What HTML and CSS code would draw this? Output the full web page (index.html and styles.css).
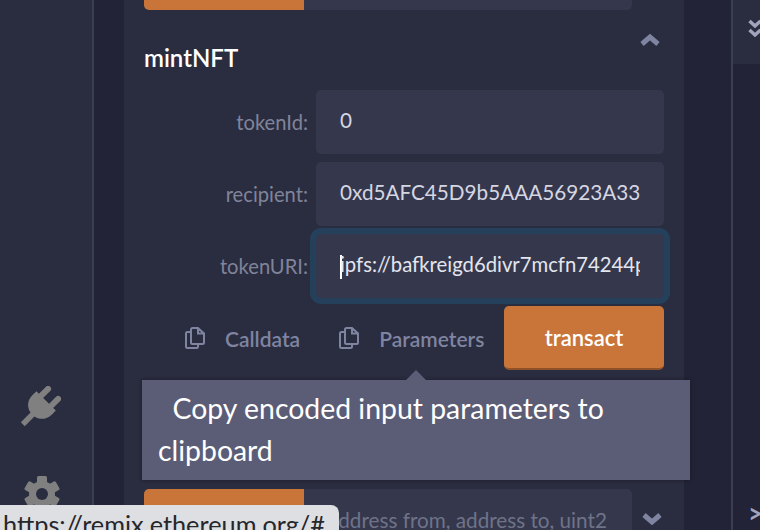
FILE: index.html
```html
<!DOCTYPE html>
<html lang="en">
<head>
  <meta charset="UTF-8">
  <title>Remix</title>
  <link rel="stylesheet" href="styles.css">
</head>
<body>
  <div class="app">
    <div class="icon-bar">
      <svg class="plug-icon" viewBox="0 0 48 48">
        <g transform="rotate(45 24 24)" fill="#808080">
          <rect x="13" y="-1" width="6.5" height="17" rx="3.2"/>
          <rect x="28.5" y="-1" width="6.5" height="17" rx="3.2"/>
          <path d="M9 13h30v6c0 9-6 14-12 15v15h-6V34C15 33 9 28 9 19z"/>
        </g>
      </svg>
      <svg class="gear-icon" viewBox="0 0 40 40">
        <g fill="#808080">
          <rect x="15" y="2" width="10" height="36" rx="1.5"/>
          <rect x="15" y="2" width="10" height="36" rx="1.5" transform="rotate(60 20 20)"/>
          <rect x="15" y="2" width="10" height="36" rx="1.5" transform="rotate(120 20 20)"/>
          <circle cx="20" cy="20" r="13"/>
        </g>
        <circle cx="20" cy="20" r="6" fill="#2a2c3f"/>
      </svg>
    </div>

    <div class="gutter">
      <div class="panel">
        <div class="fn-row fn-row-top">
          <div class="fn-button"></div>
          <div class="fn-input"></div>
        </div>

        <div class="fn-head">
          <span class="fn-title">mintNFT</span>
          <svg class="chevron" viewBox="0 0 20 12"><path d="M2 10L10 3l8 7" fill="none" stroke="#7f84a1" stroke-width="5"/></svg>
        </div>

        <div class="field">
          <label>tokenId:</label>
          <div class="text-input"><span class="input-text">0</span></div>
        </div>
        <div class="field">
          <label>recipient:</label>
          <div class="text-input"><span class="input-text">0xd5AFC45D9b5AAA56923A33</span></div>
        </div>
        <div class="field">
          <label>tokenURI:</label>
          <div class="text-input focused"><span class="input-text"><span class="caret"></span>ipfs://bafkreigd6divr7mcfn74244p</span></div>
        </div>

        <div class="actions">
          <div class="copy-link">
            <svg class="copy-icon" viewBox="0 0 20 22"><path d="M6 5H2.500a1.500 1.500 0 0 0-1.500 1.500v13A1.500 1.500 0 0 0 2.500 21h9a1.500 1.500 0 0 0 1.500-1.500V17M6 2.500A1.500 1.500 0 0 1 7.500 1H13l6 5.500v9a1.500 1.500 0 0 1-1.500 1.500h-10A1.500 1.500 0 0 1 6 15.500zM13 1v5.500h6" fill="none" stroke="#7f84a1" stroke-width="2"/></svg>
            <span>Calldata</span>
          </div>
          <div class="copy-link">
            <svg class="copy-icon" viewBox="0 0 20 22"><path d="M6 5H2.500a1.500 1.500 0 0 0-1.500 1.500v13A1.500 1.500 0 0 0 2.500 21h9a1.500 1.500 0 0 0 1.500-1.500V17M6 2.500A1.500 1.500 0 0 1 7.500 1H13l6 5.500v9a1.500 1.500 0 0 1-1.500 1.500h-10A1.500 1.500 0 0 1 6 15.500zM13 1v5.500h6" fill="none" stroke="#7f84a1" stroke-width="2"/></svg>
            <span>Parameters</span>
          </div>
          <div class="transact">transact</div>
        </div>

        <div class="fn-row fn-row-bottom">
          <div class="fn-button"></div>
          <div class="fn-input placeholder"><span class="placeholder-text">address from, address to, uint256 tokenId</span></div>
          <svg class="chevron" viewBox="0 0 20 12"><path d="M2 2L10 9l8-7" fill="none" stroke="#7f84a1" stroke-width="5"/></svg>
        </div>
      </div>
    </div>

    <div class="side-panel">
      <div class="side-head">
        <svg class="double-chevron" viewBox="0 0 14 20"><path d="M1.500 2L7 7l5.500-5M1.500 11L7 16l5.500-5" fill="none" stroke="#a2a3bd" stroke-width="3.500"/></svg>
      </div>
      <div class="prompt">&gt;</div>
    </div>
  </div>

  <div class="tooltip">
    <div class="tooltip-arrow"></div>
    &nbsp;&nbsp;Copy encoded input parameters to clipboard
  </div>

  <div class="status-url">https://remix.ethereum.org/#</div>
</body>
</html>
```

FILE: styles.css
```css
body {
  margin: 0;
  height: 530px;
  overflow: hidden;
  font-family: Lato, "Noto Sans", sans-serif;
  background: #222336;
}

.app {
  display: flex;
  height: 530px;
  overflow: hidden;
}

/* Left icon bar */
.icon-bar {
  width: 92px;
  flex: none;
  background: #2a2c3f;
  border-right: 2px solid #3b3e53;
  display: flex;
  flex-direction: column;
  align-items: center;
  justify-content: flex-end;
  gap: 44px;
  padding-bottom: 16px;
}

.plug-icon {
  width: 44px;
  height: 44px;
  margin-left: -15px;
}

.gear-icon {
  width: 40px;
  height: 40px;
  margin-left: -8px;
}

/* Middle column */
.gutter {
  width: 637px;
  flex: none;
  padding-left: 30px;
  box-sizing: border-box;
}

.panel {
  width: 560px;
  height: 600px;
  box-sizing: border-box;
  background: #2a2c3f;
  padding: 0 20px;
}

.fn-row {
  display: flex;
  height: 64px;
}

.fn-row-top {
  margin-top: -54px;
}

.fn-row-bottom {
  margin-top: 119px;
  align-items: flex-start;
}

.fn-button {
  width: 160px;
  background: #c97539;
  border-radius: 5px 0 0 5px;
  height: 64px;
}

.fn-input {
  width: 328px;
  height: 64px;
  background: #35384c;
  border-radius: 0 5px 5px 0;
  box-sizing: border-box;
}

.placeholder {
  color: #6f7389;
  font-size: 20.7px;
  line-height: 62px;
  padding: 0 24px 0 24px;
}

.placeholder-text {
  display: block;
  white-space: nowrap;
  overflow: hidden;
}

.fn-head {
  display: flex;
  justify-content: space-between;
  height: 80px;
  box-sizing: border-box;
  padding-top: 22px;
}

.fn-title {
  color: #fff;
  font-size: 24px;
  font-weight: 600;
  line-height: 52px;
  height: 52px;
}

.chevron {
  width: 20px;
  height: 12px;
  margin: 2px 4px 0 0;
}

.fn-row-bottom .chevron {
  margin: 24px 0 0 10px;
}

.field {
  display: flex;
  align-items: center;
  justify-content: flex-end;
  margin-bottom: 8px;
}

.field label {
  color: #80849a;
  font-size: 20.2px;
  line-height: 58px;
  margin-right: 8px;
}

.text-input {
  width: 348px;
  height: 64px;
  box-sizing: border-box;
  padding: 0 24px;
  background: #35384c;
  border-radius: 5px;
  color: #d5d6e2;
  font-size: 20.7px;
  line-height: 61px;
}

.input-text {
  display: block;
  white-space: nowrap;
  overflow: hidden;
}

.text-input.focused {
  box-shadow: 0 0 0 6px #25405a;
  color: #e4e5ee;
  font-size: 20.3px;
}

.caret {
  display: inline-block;
  width: 2px;
  height: 24px;
  margin-right: -2px;
  background: #fff;
  vertical-align: middle;
}

.actions {
  display: flex;
  align-items: center;
  height: 64px;
}

.copy-link {
  display: flex;
  align-items: center;
  gap: 20px;
  color: #7f84a1;
  font-size: 21px;
  font-weight: 600;
  margin-left: 41px;
  white-space: nowrap;
}

.copy-link + .copy-link {
  margin-left: 39px;
}

.copy-icon {
  width: 20px;
  height: 22px;
}

.transact {
  margin-left: auto;
  width: 160px;
  height: 64px;
  box-sizing: border-box;
  background: #c97539;
  border-bottom: 2px solid #8f5228;
  border-radius: 5px;
  color: #fff;
  font-size: 22px;
  font-weight: 600;
  text-align: center;
  line-height: 64px;
}

/* Right panel */
.side-panel {
  flex: 1;
  border-left: 2px solid #3b3e53;
  position: relative;
}

.side-head {
  height: 64px;
  background: #2a2c3f;
  padding: 19px 0 0 15px;
  box-sizing: border-box;
}

.double-chevron {
  width: 14px;
  height: 20px;
  display: block;
}

.prompt {
  color: #a2a3bd;
  font-size: 26px;
  font-weight: 700;
  padding: 436px 0 0 15px;
  line-height: 26px;
}

/* Overlays */
.tooltip {
  position: absolute;
  left: 142px;
  top: 380px;
  width: 548px;
  height: 100px;
  box-sizing: border-box;
  padding: 7px 16px;
  background: #5b5d76;
  box-shadow: 0 0 4px rgba(0, 0, 0, 0.35);
  color: #fff;
  font-size: 28.4px;
  line-height: 42px;
}

.tooltip-arrow {
  position: absolute;
  left: 264px;
  top: -10px;
  width: 0;
  height: 0;
  border-left: 10px solid transparent;
  border-right: 10px solid transparent;
  border-bottom: 10px solid #5b5d76;
}

.status-url {
  position: absolute;
  left: 0;
  top: 505px;
  width: 339px;
  height: 25px;
  box-sizing: border-box;
  padding-left: 3px;
  overflow: hidden;
  background: #dedfe3;
  border-radius: 0 8px 0 0;
  color: #26272b;
  font-size: 25.3px;
  line-height: 38px;
  white-space: nowrap;
}
```
